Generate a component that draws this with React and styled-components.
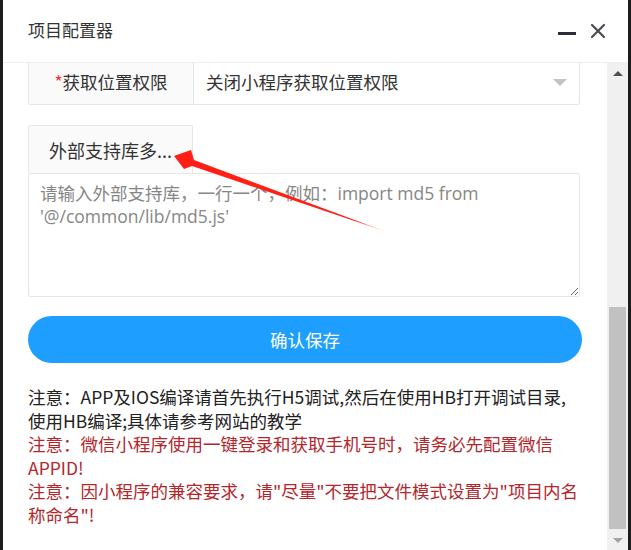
import styled, { createGlobalStyle } from "styled-components";

const GlobalStyle = createGlobalStyle`
  html, body {
    margin: 0;
    padding: 0;
    background: #1c1c1c;
  }
  body {
    font-family: "Noto Sans CJK SC", "Noto Sans", sans-serif;
  }
`;

const Screen = styled.div`
  height: 550px;
  display: flex;
  padding: 0 3px;
  box-sizing: border-box;
  position: relative;
`;

const Window = styled.div`
  flex: 1;
  display: flex;
  flex-direction: column;
  background: #fff;
  min-width: 0;
`;

const Header = styled.div`
  height: 62px;
  flex-shrink: 0;
  display: flex;
  align-items: center;
  padding: 0 22px 0 25px;
  border-bottom: 1px solid #eeeeee;
`;

const Title = styled.div`
  flex: 1;
  font-size: 17px;
  color: #333;
  margin-top: -4px;
`;

const HeaderIcons = styled.div`
  display: flex;
  align-items: center;
  gap: 14px;
`;

const Minimize = styled.span`
  width: 18px;
  height: 3px;
  background: #2d2d38;
  margin-top: 4px;
`;

const Body = styled.div`
  flex: 1;
  display: flex;
  min-height: 0;
`;

const Content = styled.div`
  flex: 1;
  overflow: hidden;
  display: flex;
  flex-direction: column;
  justify-content: flex-end;
  padding: 0 27px 24px 25px;
`;

const SelectRow = styled.div`
  flex-shrink: 0;
  height: 47px;
  display: flex;
  border: 1px solid #e6e6e6;
  border-radius: 2px;
  box-sizing: border-box;
  margin-bottom: 20px;
`;

const Label = styled.div`
  width: 164px;
  display: flex;
  align-items: center;
  justify-content: center;
  background: #fafafa;
  border-right: 1px solid #e6e6e6;
  font-size: 17.5px;
  color: #333;
`;

const Star = styled.span`
  color: #ff2b2b;
`;

const SelectValue = styled.div`
  flex: 1;
  display: flex;
  align-items: center;
  justify-content: space-between;
  padding: 0 12px;
  font-size: 17.5px;
  color: #333;
`;

const Caret = styled.span`
  width: 0;
  height: 0;
  border-left: 7px solid transparent;
  border-right: 7px solid transparent;
  border-top: 7px solid #c2c2c2;
  margin-top: 2px;
`;

const LibButton = styled.div`
  flex-shrink: 0;
  width: 165px;
  height: 48px;
  box-sizing: border-box;
  display: flex;
  align-items: center;
  justify-content: center;
  background: #fafafa;
  border: 1px solid #e6e6e6;
  border-bottom: none;
  border-radius: 2px 2px 0 0;
  font-size: 18px;
  color: #333;
`;

const LibInput = styled.textarea`
  flex-shrink: 0;
  height: 124px;
  box-sizing: border-box;
  border: 1px solid #e6e6e6;
  border-radius: 2px;
  padding: 8px 11px;
  margin: 0 0 19px;
  font-family: "Open Sans", "Noto Sans CJK SC", sans-serif;
  font-size: 17.5px;
  line-height: 23px;
  color: #333;
  outline: none;
  &::placeholder {
    color: #868686;
  }
`;

const Confirm = styled.button`
  flex-shrink: 0;
  height: 47px;
  border: none;
  border-radius: 24px;
  background: #1e9fff;
  color: #fff;
  font-family: "Noto Sans CJK SC", sans-serif;
  font-size: 17.5px;
  margin-bottom: 22px;
  margin-right: -2px;
`;

const Note = styled.p`
  margin: 0;
  font-size: 17.5px;
  line-height: 23.5px;
  color: ${(p) => (p.$warn ? "#b3262c" : "#222")};
`;

const Scrollbar = styled.div`
  width: 21px;
  flex-shrink: 0;
  background: #f0f0f0;
  display: flex;
  flex-direction: column;
  align-items: center;
`;

const ArrowBox = styled.div`
  height: 20px;
  width: 100%;
  display: flex;
  align-items: center;
  justify-content: center;
`;

const Tri = styled.span`
  width: 0;
  height: 0;
  border-left: 5px solid transparent;
  border-right: 5px solid transparent;
  ${(p) =>
    p.$up
      ? "border-bottom: 5px solid #505050;"
      : "border-top: 5px solid #a3a3a3;"}
`;

const Track = styled.div`
  flex: 1;
  width: 100%;
  display: flex;
  flex-direction: column;
  justify-content: flex-end;
  align-items: center;
`;

const Thumb = styled.div`
  width: 17px;
  height: 222px;
  background: #c1c1c1;
  margin-bottom: 1px;
`;

const Annotation = styled.svg`
  position: absolute;
  left: 0;
  top: 0;
  pointer-events: none;
`;

export default function App() {
  return (
    <>
      <GlobalStyle />
      <Screen>
        <Window>
          <Header>
            <Title>项目配置器</Title>
            <HeaderIcons>
              <Minimize />
              <svg width="16" height="16" viewBox="0 0 16 16">
                <path
                  d="M2 2 L14 14 M14 2 L2 14"
                  stroke="#4a4a52"
                  strokeWidth="2.2"
                  strokeLinecap="round"
                />
              </svg>
            </HeaderIcons>
          </Header>
          <Body>
            <Content>
              <SelectRow>
                <Label>
                  <Star>*</Star>获取位置权限
                </Label>
                <SelectValue>
                  关闭小程序获取位置权限
                  <Caret />
                </SelectValue>
              </SelectRow>
              <LibButton>外部支持库多...</LibButton>
              <LibInput placeholder="请输入外部支持库，一行一个，例如：import md5 from '@/common/lib/md5.js'" />
              <Confirm>确认保存</Confirm>
              <Note>
                注意：APP及IOS编译请首先执行H5调试,然后在使用HB打开调试目录,使用HB编译;具体请参考网站的教学
              </Note>
              <Note $warn>
                注意：微信小程序使用一键登录和获取手机号时，请务必先配置微信APPID!
              </Note>
              <Note $warn>
                注意：因小程序的兼容要求，请"尽量"不要把文件模式设置为"项目内名称命名"!
              </Note>
            </Content>
            <Scrollbar>
              <ArrowBox>
                <Tri $up />
              </ArrowBox>
              <Track>
                <Thumb />
              </Track>
              <ArrowBox>
                <Tri />
              </ArrowBox>
            </Scrollbar>
          </Body>
        </Window>
        <Annotation width="631" height="550" viewBox="0 0 631 550">
          <defs>
            <linearGradient id="fade" x1="174" y1="156" x2="387" y2="232" gradientUnits="userSpaceOnUse">
              <stop offset="0" stopColor="#ff1f14" />
              <stop offset="0.85" stopColor="#ff1f14" />
              <stop offset="1" stopColor="#ff1f14" stopOpacity="0.15" />
            </linearGradient>
          </defs>
          <path
            d="M387 232 L194 160 L191 150 L174 156 L184 169 L192 166 Z"
            fill="url(#fade)"
          />
        </Annotation>
      </Screen>
    </>
  );
}
